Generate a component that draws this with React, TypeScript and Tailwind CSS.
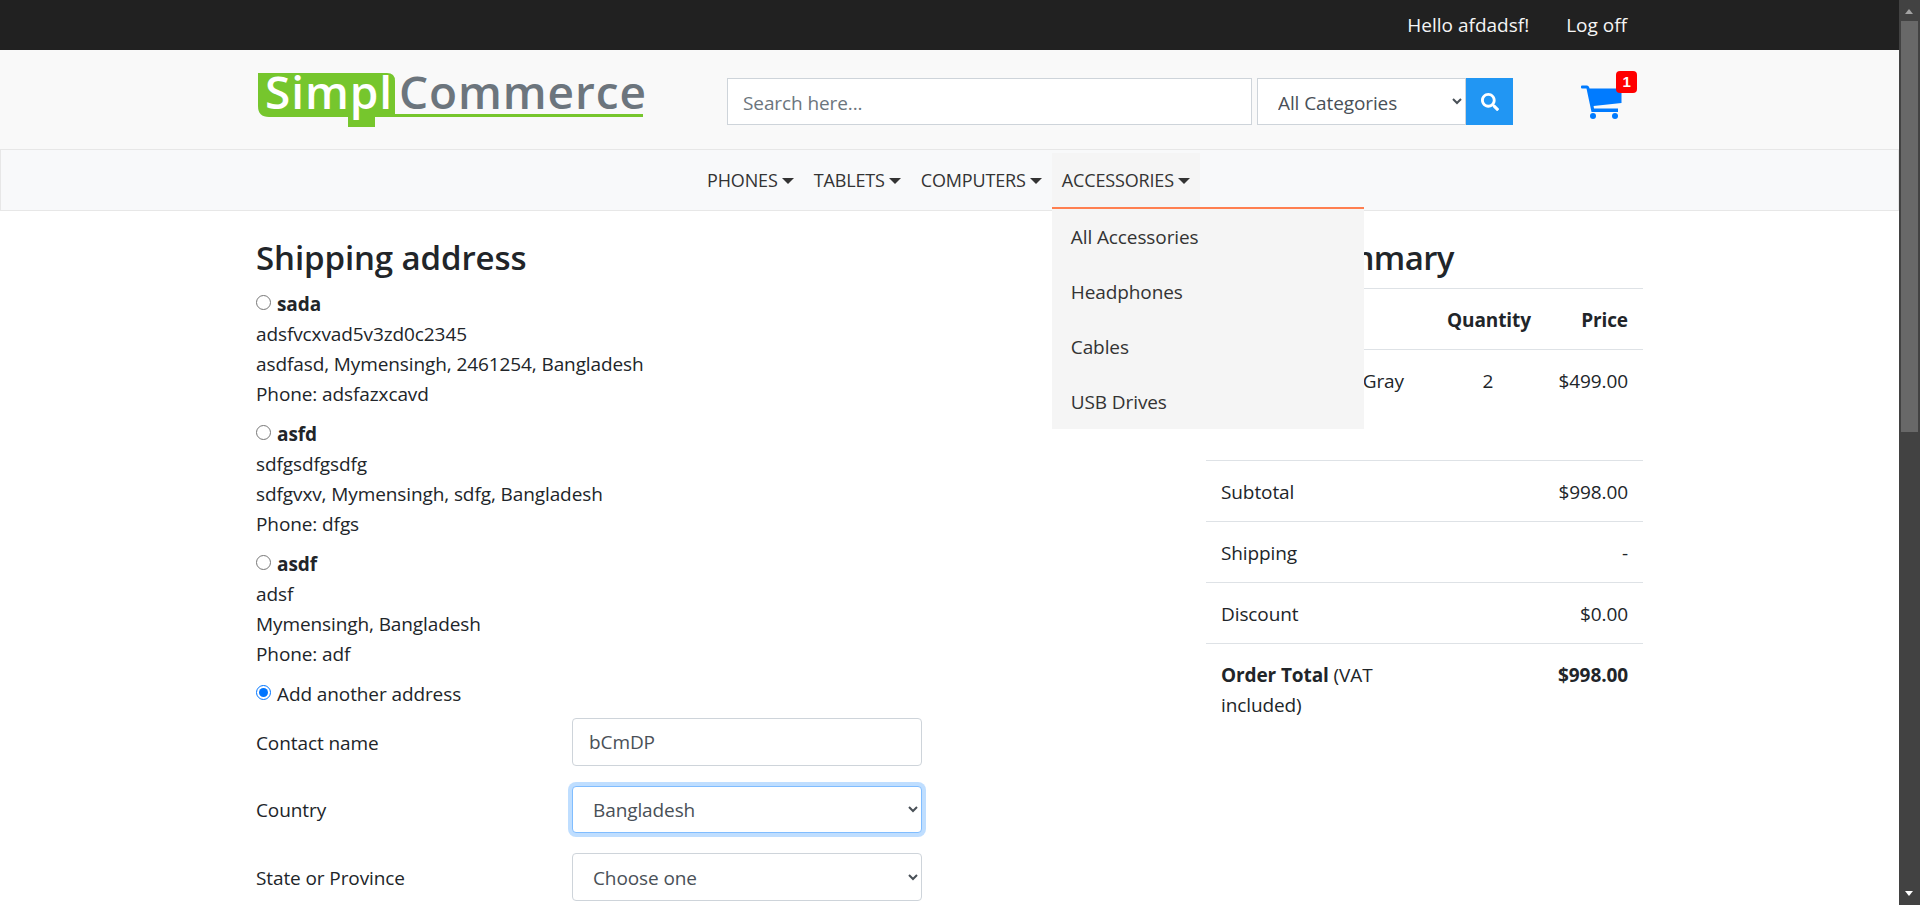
import { FaSearch } from 'react-icons/fa';

const navItems = ['PHONES', 'TABLETS', 'COMPUTERS'];
const dropdownItems = ['All Accessories', 'Headphones', 'Cables', 'USB Drives'];

const addresses = [
  { name: 'sada', lines: ['adsfvcxvad5v3zd0c2345', 'asdfasd, Mymensingh, 2461254, Bangladesh', 'Phone: adsfazxcavd'] },
  { name: 'asfd', lines: ['sdfgsdfgsdfg', 'sdfgvxv, Mymensingh, sdfg, Bangladesh', 'Phone: dfgs'] },
  { name: 'asdf', lines: ['adsf', 'Mymensingh, Bangladesh', 'Phone: adf'] },
];

const totals = [
  { label: 'Subtotal', value: '$998.00' },
  { label: 'Shipping', value: '-' },
  { label: 'Discount', value: '$0.00' },
];

function Logo() {
  return (
    <div className="relative ml-[2px] h-[54px] w-[385px] shrink-0">
      {/* green tab and underline behind the wordmark */}
      <svg className="absolute inset-0" width="385" height="54" viewBox="0 0 385 54">
        <path
          d="M0 0H129Q137 0 137 8V41H385V44H117V54H90V44H11Q0 44 0 33Z"
          fill="#76c62d"
        />
      </svg>
      <div className="relative flex pl-[7px] font-['Open_Sans',sans-serif] text-[46px] leading-[36px] font-semibold tracking-[0.9px]">
        <span className="text-white">Simpl</span>
        <span className="ml-[6px] text-[#6c757d]">Commerce</span>
      </div>
    </div>
  );
}

function CartIcon() {
  return (
    <svg width="41" height="34" viewBox="0 0 41 34" fill="#007bff">
      <path d="M0 1.5Q0 0.5 1 0.5H6Q7.5 0.5 8 2L8.6 3.5H40.5V18L12.6 21L13 23.5H37V27H10.5L5.5 3.5H1Q0 3.5 0 2.5Z" />
      <circle cx="12" cy="31" r="3" />
      <circle cx="34" cy="31" r="3" />
    </svg>
  );
}

function Header() {
  return (
    <div className="flex h-[99px] items-center bg-[#f9f9f9] pl-[256px]">
      <Logo />
      <div className="mt-[4px] ml-[84px] flex h-[47px] items-stretch">
        <input
          readOnly
          placeholder="Search here..."
          className="w-[525px] border border-[#ced4da] bg-white px-[15px] pt-[2px] text-[#495057] placeholder:text-[#6c757d]"
        />
        <select className="ml-[5px] w-[209px] border border-[#ced4da] bg-white pt-[2px] pl-[16px] text-[#495057]">
          <option>All Categories</option>
        </select>
        <button type="button" className="flex w-[47px] items-center justify-center bg-[#2196f3] text-white">
          <FaSearch className="h-[18px] w-[18px]" />
        </button>
      </div>
      <div className="relative mt-[4px] ml-[68px]">
        <CartIcon />
        <span className="absolute -top-[14px] -right-[15px] flex h-[22px] w-[21px] items-center justify-center rounded-[4px] bg-[#ff0000] font-['Liberation_Sans',sans-serif] text-[15px] font-bold text-white">
          1
        </span>
      </div>
    </div>
  );
}

function Caret() {
  return <span className="ml-[4px] inline-block border-x-[6px] border-t-[6px] border-x-transparent border-t-[#333333] align-[3px]" />;
}

function Nav() {
  return (
    <nav className="relative flex h-[62px] justify-center border border-[#e7e7e7] bg-[#f8f9fa] pr-[2px] text-[18px] tracking-[-0.15px] text-[#333333]">
      <ul className="flex">
        {navItems.map(item => (
          <li key={item} className="mt-[3px] h-[54px] px-[10px] leading-[54px]">
            {item}
            <Caret />
          </li>
        ))}
        <li className="relative mt-[3px] h-[54px] bg-[#f5f5f5] px-[10px] leading-[54px]">
          ACCESSORIES
          <Caret />
          {/* open dropdown lies over the page content */}
          <div className="absolute top-[54px] left-0 z-10 w-[312px] border-t-2 border-[#ff7f50] bg-[#f5f5f5] text-[19px] tracking-[-0.1px]">
            {dropdownItems.map(link => (
              <div key={link} className="h-[55px] px-[19px] leading-[56px]">
                {link}
              </div>
            ))}
          </div>
        </li>
      </ul>
    </nav>
  );
}

function FormRow({ label, children }: { label: string; children: React.ReactNode }) {
  return (
    <div className="mb-[20px] grid grid-cols-[316px_350px] items-center">
      <label className="pt-[2px]">{label}</label>
      {children}
    </div>
  );
}

function ShippingForm() {
  return (
    <div className="min-w-0 flex-1">
      <h2 className="mb-[11px] text-[33px] leading-[38px] font-semibold">Shipping address</h2>
      {addresses.map(address => (
        <div key={address.name} className="mb-[10px]">
          <label className="flex h-[30px] items-center">
            <input type="radio" name="address" className="mr-[6px] -mt-[2px] h-[15px] w-[15px]" />
            <strong className="pt-[2px] font-bold">{address.name}</strong>
          </label>
          {address.lines.map(line => (
            <div key={line} className="h-[30px] leading-[32px]">
              {line}
            </div>
          ))}
        </div>
      ))}
      <label className="mb-[10px] flex h-[30px] items-center">
        <input type="radio" name="address" defaultChecked className="mr-[6px] -mt-[2px] h-[15px] w-[15px]" />
        <span className="pt-[2px]">Add another address</span>
      </label>
      <FormRow label="Contact name">
        <input
          readOnly
          value="bCmDP"
          className="h-[47.5px] rounded-[4px] border border-[#ced4da] bg-white px-[16px] text-[#495057]"
        />
      </FormRow>
      <FormRow label="Country">
        <select className="h-[47.5px] rounded-[4px] border border-[#80bdff] bg-white px-[16px] pt-[2px] text-[#495057] shadow-[0_0_0_4px_rgba(0,123,255,0.25)]">
          <option>Bangladesh</option>
        </select>
      </FormRow>
      <FormRow label="State or Province">
        <select className="h-[47.5px] rounded-[4px] border border-[#ced4da] bg-white px-[16px] pt-[2px] text-[#495057]">
          <option>Choose one</option>
        </select>
      </FormRow>
    </div>
  );
}

function OrderSummary() {
  return (
    <div className="w-[437px] shrink-0">
      <h2 className="mb-[11px] text-[33px] leading-[38px] font-semibold tracking-[-0.6px]">Order Summary</h2>
      <div className="flex h-[61px] items-center border-t border-[#dee2e6] pt-[2px] pr-[15px] font-bold">
        <span className="ml-[241px] w-[82px] text-center whitespace-nowrap">Quantity</span>
        <span className="flex-1 text-right">Price</span>
      </div>
      <div className="flex h-[111px] border-t border-[#dee2e6] pt-[16px] pr-[15px] leading-[30px]">
        <span className="w-[198px] text-right whitespace-nowrap">iPhone 6s Space Gray</span>
        <span className="ml-[43px] w-[82px] text-center">2</span>
        <span className="flex-1 text-right">$499.00</span>
      </div>
      {totals.map(row => (
        <div key={row.label} className="flex h-[61px] items-center justify-between border-t border-[#dee2e6] px-[15px] pt-[2px]">
          <span>{row.label}</span>
          <span>{row.value}</span>
        </div>
      ))}
      <div className="flex justify-between border-t border-[#dee2e6] px-[15px] pt-[16px]">
        <span>
          <strong className="font-bold">Order Total</strong> (VAT
          <br />
          included)
        </span>
        <strong className="font-bold">$998.00</strong>
      </div>
    </div>
  );
}

function Scrollbar() {
  return (
    <aside className="relative w-[21px] shrink-0 bg-[#424242]">
      <div className="absolute top-[9px] left-[6px] border-x-[4.5px] border-b-[5px] border-x-transparent border-b-[#a3a3a3]" />
      <div className="absolute top-[21px] left-[2px] h-[411px] w-[17px] bg-[#686868]" />
      <div className="absolute bottom-[9px] left-[6px] border-x-[4.5px] border-t-[5px] border-x-transparent border-t-white" />
    </aside>
  );
}

export default function App() {
  return (
    <div className="flex h-[905px] overflow-hidden bg-white font-['Open_Sans',sans-serif] text-[19px] leading-[30px] tracking-[-0.1px] text-[#212529]">
      <div className="min-w-0 flex-1">
        <div className="flex h-[50px] items-center justify-end gap-[37px] bg-[#212121] pr-[272px] tracking-normal text-[#f5f5f5]">
          <span>Hello afdadsf!</span>
          <span>Log off</span>
        </div>
        <Header />
        <Nav />
        <main className="flex px-[256px] pt-[28px]">
          <ShippingForm />
          <OrderSummary />
        </main>
      </div>
      <Scrollbar />
    </div>
  );
}
